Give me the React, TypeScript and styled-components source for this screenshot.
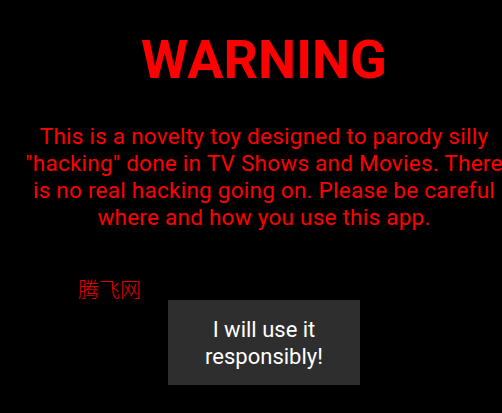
import React from "react";
import styled, { createGlobalStyle } from "styled-components";

const Global = createGlobalStyle`
  html, body { margin: 0; padding: 0; background: #000; overflow: hidden; }
  body { font-family: Roboto, "Liberation Sans", sans-serif; }
`;

const Page = styled.div`
  width: 528px;
  height: 413px;
  background: #000;
  display: flex;
  flex-direction: column;
  align-items: center;
  position: relative;
`;

const Title = styled.h1`
  margin: 32px 0 0;
  font-size: 54px;
  line-height: 56px;
  font-weight: 700;
  color: #ff0000;
`;

const Message = styled.p`
  margin: 35px 0 0;
  width: 528px;
  text-align: center;
  font-size: 22.5px;
  letter-spacing: 0.25px;
  line-height: 27px;
  color: #ff0000;
  white-space: pre;
`;

const Watermark = styled.div`
  position: absolute;
  left: 78px;
  top: 276px;
  font-family: "Noto Sans CJK SC", sans-serif;
  font-weight: 300;
  font-size: 21px;
  line-height: 24px;
  color: #e00000;
`;

const Button = styled.button`
  margin-top: 69px;
  width: 192px;
  height: 85px;
  background: #2e2e2e;
  border: none;
  color: #fff;
  font-family: Roboto, "Liberation Sans", sans-serif;
  font-size: 22px;
  line-height: 27px;
  padding: 0 12px;
`;

export default function App() {
  return (
    <Page>
      <Global />
      <Title>WARNING</Title>
      <Message>
        {"This is a novelty toy designed to parody silly\n\"hacking\" done in TV Shows and Movies. There\nis no real hacking going on. Please be careful\nwhere and how you use this app."}
      </Message>
      <Watermark>腾飞网</Watermark>
      <Button>I will use it responsibly!</Button>
    </Page>
  );
}
